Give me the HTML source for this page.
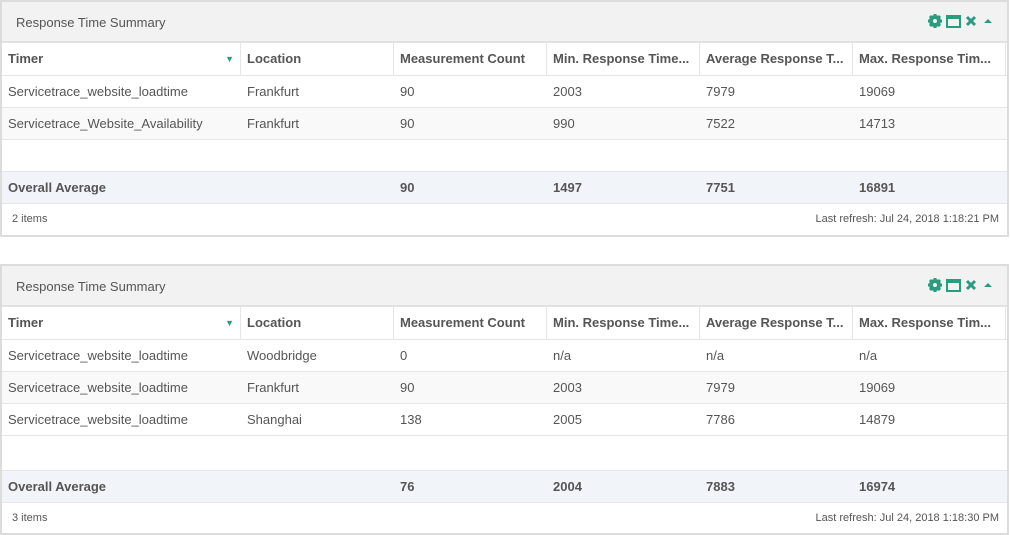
<!DOCTYPE html>
<html><head><style>
*{margin:0;padding:0;box-sizing:border-box}
body{width:1010px;height:535px;background:#fff;font-family:"Liberation Sans",sans-serif;color:#555;font-size:13px;position:relative;overflow:hidden}
.p{position:absolute;left:0;width:1009px;border:2px solid #dcdcdc;background:#fff}
.hd{height:41px;background:#f2f2f2;border-bottom:2px solid #e2e2e2;position:relative}
.hd span{position:absolute;left:14px;top:13px;font-size:13px;color:#555}
.ic{position:absolute;right:12px;top:12px;display:flex;gap:4px;align-items:center}
.r{display:flex;height:32px;border-bottom:1px solid #e6e6e6;align-items:center}
.r div{padding-left:6px;white-space:nowrap;overflow:hidden;height:100%;line-height:32px}
.c1{width:239px}.c2{width:153px}.c3,.c4,.c5,.c6{width:153px}
.th div{font-weight:bold;border-right:1px solid #e6e6e6}
.th{height:33px}
.tot{background:#f1f5fa;font-weight:bold}
.ft{height:31px;font-size:11px;position:relative}
.ft .l{position:absolute;left:10px;top:9px}
.ft .rr{position:absolute;right:8px;top:9px}
</style></head><body>

<div class="p" style="top:0;height:237px">
<div class="hd"><span>Response Time Summary</span>
<div class="ic">
<svg width="14" height="14" viewBox="0 0 14 14"><circle cx="7" cy="7" r="4.5" fill="none" stroke="#2a9d7f" stroke-width="3"/><g stroke="#2a9d7f" stroke-width="3"><line x1="7" y1="0" x2="7" y2="14"/><line x1="0" y1="7" x2="14" y2="7"/><line x1="2" y1="2" x2="12" y2="12"/><line x1="12" y1="2" x2="2" y2="12"/></g><circle cx="7" cy="7" r="2" fill="#f2f2f2"/></svg>
<svg width="15" height="13"><rect x="1" y="1" width="13" height="11" fill="none" stroke="#2a9d7f" stroke-width="2"/><rect x="1" y="1" width="13" height="3" fill="#2a9d7f"/></svg>
<svg width="12" height="12"><path d="M2 2L10 10M10 2L2 10" stroke="#2a9d7f" stroke-width="3"/></svg>
<svg width="14" height="12"><path d="M3 8L7 4L11 8Z" fill="#2a9d7f"/></svg>
</div></div>
<div class="r th"><div class="c1" style="position:relative">Timer<span style="position:absolute;right:6px;top:0;color:#2a9d7f;font-size:9px">▼</span></div><div class="c2">Location</div><div class="c3">Measurement Count</div><div class="c4">Min. Response Time...</div><div class="c5">Average Response T...</div><div class="c6">Max. Response Tim...</div></div>
<div class="r"><div class="c1">Servicetrace_website_loadtime</div><div class="c2">Frankfurt</div><div class="c3">90</div><div class="c4">2003</div><div class="c5">7979</div><div class="c6">19069</div></div>
<div class="r" style="background:#f9f9f9"><div class="c1">Servicetrace_Website_Availability</div><div class="c2">Frankfurt</div><div class="c3">90</div><div class="c4">990</div><div class="c5">7522</div><div class="c6">14713</div></div>
<div class="r" style="height:32px"></div>
<div class="r tot"><div class="c1">Overall Average</div><div class="c2"></div><div class="c3">90</div><div class="c4">1497</div><div class="c5">7751</div><div class="c6">16891</div></div>
<div class="ft"><span class="l">2 items</span><span class="rr">Last refresh: Jul 24, 2018 1:18:21 PM</span></div>
</div>

<div class="p" style="top:264px;height:271px">
<div class="hd"><span>Response Time Summary</span>
<div class="ic">
<svg width="14" height="14" viewBox="0 0 14 14"><circle cx="7" cy="7" r="4.5" fill="none" stroke="#2a9d7f" stroke-width="3"/><g stroke="#2a9d7f" stroke-width="3"><line x1="7" y1="0" x2="7" y2="14"/><line x1="0" y1="7" x2="14" y2="7"/><line x1="2" y1="2" x2="12" y2="12"/><line x1="12" y1="2" x2="2" y2="12"/></g><circle cx="7" cy="7" r="2" fill="#f2f2f2"/></svg>
<svg width="15" height="13"><rect x="1" y="1" width="13" height="11" fill="none" stroke="#2a9d7f" stroke-width="2"/><rect x="1" y="1" width="13" height="3" fill="#2a9d7f"/></svg>
<svg width="12" height="12"><path d="M2 2L10 10M10 2L2 10" stroke="#2a9d7f" stroke-width="3"/></svg>
<svg width="14" height="12"><path d="M3 8L7 4L11 8Z" fill="#2a9d7f"/></svg>
</div></div>
<div class="r th"><div class="c1" style="position:relative">Timer<span style="position:absolute;right:6px;top:0;color:#2a9d7f;font-size:9px">▼</span></div><div class="c2">Location</div><div class="c3">Measurement Count</div><div class="c4">Min. Response Time...</div><div class="c5">Average Response T...</div><div class="c6">Max. Response Tim...</div></div>
<div class="r"><div class="c1">Servicetrace_website_loadtime</div><div class="c2">Woodbridge</div><div class="c3">0</div><div class="c4">n/a</div><div class="c5">n/a</div><div class="c6">n/a</div></div>
<div class="r" style="background:#f9f9f9"><div class="c1">Servicetrace_website_loadtime</div><div class="c2">Frankfurt</div><div class="c3">90</div><div class="c4">2003</div><div class="c5">7979</div><div class="c6">19069</div></div>
<div class="r"><div class="c1">Servicetrace_website_loadtime</div><div class="c2">Shanghai</div><div class="c3">138</div><div class="c4">2005</div><div class="c5">7786</div><div class="c6">14879</div></div>
<div class="r" style="height:35px"></div>
<div class="r tot"><div class="c1">Overall Average</div><div class="c2"></div><div class="c3">76</div><div class="c4">2004</div><div class="c5">7883</div><div class="c6">16974</div></div>
<div class="ft"><span class="l">3 items</span><span class="rr">Last refresh: Jul 24, 2018 1:18:30 PM</span></div>
</div>
</body></html>
